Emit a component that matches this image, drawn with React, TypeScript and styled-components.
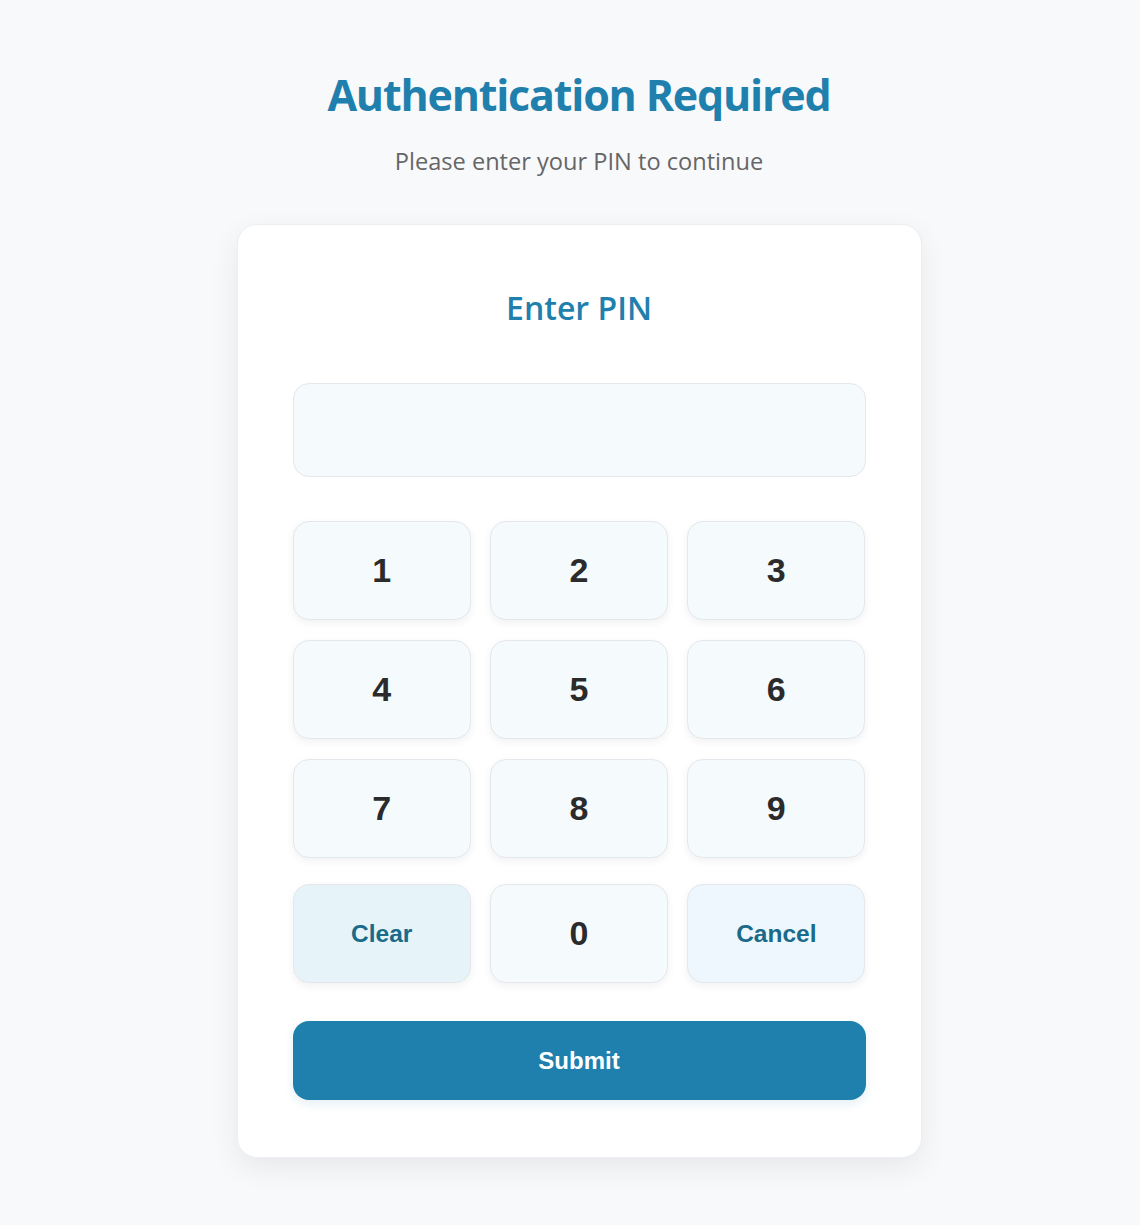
import React, { useState } from "react";
import styled, { createGlobalStyle } from "styled-components";

const GlobalStyle = createGlobalStyle`
  html, body {
    margin: 0;
    padding: 0;
    background: #f8f9fb;
  }
  body {
    font-family: "Open Sans", "Noto Sans", sans-serif;
  }
`;

const Page = styled.main`
  min-height: 1225px;
  box-sizing: border-box;
  display: flex;
  flex-direction: column;
  align-items: center;
  padding: 66px 0 0 18px;
`;

const Title = styled.h1`
  margin: 0;
  font-family: "Open Sans", "Noto Sans", sans-serif;
  font-size: 43px;
  font-weight: 700;
  line-height: 58px;
  color: #1f80ae;
  letter-spacing: -1.2px;
`;

const Subtitle = styled.p`
  margin: 21px 0 0;
  font-family: "Open Sans", "Noto Sans", sans-serif;
  font-size: 23.6px;
  line-height: 32px;
  color: #666;
`;

const Card = styled.section`
  margin-top: 47px;
  width: 685px;
  box-sizing: border-box;
  background: #ffffff;
  border: 1px solid #eceef1;
  border-radius: 20px;
  box-shadow: 0 10px 30px rgba(0, 0, 0, 0.07);
  padding: 56px 55px 57px;
  display: flex;
  flex-direction: column;
`;

const CardTitle = styled.h2`
  margin: 0;
  text-align: center;
  font-family: "Open Sans", "Noto Sans", sans-serif;
  font-size: 32px;
  font-weight: 600;
  line-height: 54px;
  color: #1f80ae;
`;

const Display = styled.div`
  margin-top: 48px;
  height: 94px;
  box-sizing: border-box;
  background: #f5fafd;
  border: 1px solid #e3e8ec;
  border-radius: 16px;
  display: flex;
  align-items: center;
  justify-content: center;
  font-family: "Liberation Sans", Arial, sans-serif;
  font-size: 34px;
  letter-spacing: 12px;
  color: #2d2d2d;
`;

const Keypad = styled.div`
  margin-top: 44px;
  display: grid;
  grid-template-columns: repeat(3, 1fr);
  column-gap: 19px;
  row-gap: 20px;
`;

const BottomRow = styled(Keypad)`
  margin-top: 26px;
`;

type Variant = "digit" | "clear" | "cancel";

const Key = styled.button<{ $variant: Variant }>`
  height: 99px;
  box-sizing: border-box;
  border: 1px solid #e4e8ec;
  border-radius: 16px;
  background: ${(p) =>
    p.$variant === "clear" ? "#e6f4fa" : p.$variant === "cancel" ? "#eef7fd" : "#f5fafd"};
  box-shadow: 0 3px 8px rgba(0, 0, 0, 0.06);
  font-family: "Liberation Sans", Arial, sans-serif;
  font-weight: 700;
  font-size: ${(p) => (p.$variant === "digit" ? "34px" : "24.5px")};
  color: ${(p) => (p.$variant === "digit" ? "#2b2b2b" : "#1a6a89")};
  cursor: pointer;
  padding: 0;
`;

const Submit = styled.button`
  margin-top: 38px;
  height: 79px;
  border: none;
  border-radius: 16px;
  background: #1f80ae;
  color: #ffffff;
  font-family: "Liberation Sans", Arial, sans-serif;
  font-weight: 700;
  font-size: 24px;
  box-shadow: 0 4px 10px rgba(31, 128, 174, 0.12);
  cursor: pointer;
`;

export default function App() {
  const [pin, setPin] = useState("");
  const press = (d: string) => setPin((p) => (p.length < 8 ? p + d : p));
  const digits = ["1", "2", "3", "4", "5", "6", "7", "8", "9"];
  return (
    <>
      <GlobalStyle />
      <Page>
        <Title>Authentication Required</Title>
        <Subtitle>Please enter your PIN to continue</Subtitle>
        <Card>
          <CardTitle>Enter PIN</CardTitle>
          <Display>{"•".repeat(pin.length)}</Display>
          <Keypad>
            {digits.map((d) => (
              <Key key={d} $variant="digit" onClick={() => press(d)}>
                {d}
              </Key>
            ))}
          </Keypad>
          <BottomRow>
            <Key $variant="clear" onClick={() => setPin("")}>
              Clear
            </Key>
            <Key $variant="digit" onClick={() => press("0")}>
              0
            </Key>
            <Key $variant="cancel" onClick={() => setPin("")}>
              Cancel
            </Key>
          </BottomRow>
          <Submit>Submit</Submit>
        </Card>
      </Page>
    </>
  );
}
